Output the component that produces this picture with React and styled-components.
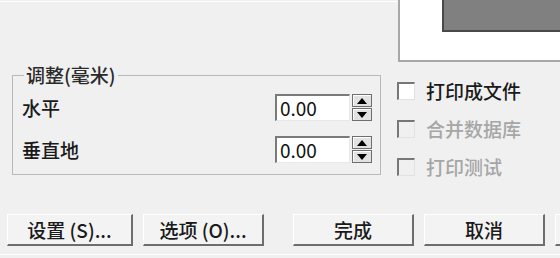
import React from "react";
import styled, { createGlobalStyle } from "styled-components";

const GlobalStyle = createGlobalStyle`
  html, body {
    margin: 0;
    padding: 0;
    background: #f0f0f0;
  }
  body {
    font-family: "Noto Sans CJK SC", "Noto Sans", sans-serif;
    color: #1a1a1a;
  }
`;

let Dialog = styled.div`
  width: 560px;
  height: 258px;
  overflow: hidden;
  background: #f0f0f0;
  display: flex;
  flex-direction: column;
`;

let TopStrip = styled.div`
  display: flex;
  height: 62px;
`;

let TopFiller = styled.div`
  flex: 1;
  margin-top: 1px;
  border-top: 1px solid #ffffff;
`;

let Preview = styled.div`
  width: 160px;
  height: 60px;
  background: #ffffff;
  border-left: 2px solid #a8a8a8;
  border-bottom: 2px solid #a8a8a8;
  display: flex;
  justify-content: flex-end;
  align-items: flex-start;
`;

let PreviewPage = styled.div`
  width: 116px;
  height: 30px;
  background: #808080;
  border-left: 2px solid #4a4a4a;
  border-bottom: 2px solid #4a4a4a;
`;

let Main = styled.div`
  display: flex;
  align-items: flex-start;
`;

let Group = styled.fieldset`
  margin: 2px 0 0 12px;
  padding: 8px 8px 11px 9px;
  width: 369px;
  box-sizing: border-box;
  border: 1px solid #b8b8b8;
  min-width: 0;
  display: flex;
  flex-direction: column;
  gap: 15px;
`;

let Legend = styled.legend`
  margin-left: 2px;
  padding: 0 2px;
  font-size: 19px;
  font-weight: 500;
  line-height: 22px;
  color: #2a2a2a;
`;

let Row = styled.div`
  display: flex;
  align-items: center;
  height: 27px;
`;

let Label = styled.span`
  font-size: 19px;
  font-weight: 500;
  line-height: 22px;
`;

let NumberField = styled.div`
  margin-left: auto;
  display: flex;
  gap: 2px;
`;

let Input = styled.div`
  width: 75px;
  height: 27px;
  box-sizing: border-box;
  background: #ffffff;
  border-style: solid;
  border-width: 2px 1px 1px 2px;
  border-color: #7a7a7a #e8e8e8 #e8e8e8 #7a7a7a;
  padding-left: 3px;
  font-size: 19px;
  line-height: 23px;
  color: #111;
`;

let Spinner = styled.div`
  width: 20px;
  height: 27px;
  display: flex;
  flex-direction: column;
  gap: 1px;
`;

let SpinButton = styled.div`
  flex: 1;
  box-sizing: border-box;
  background: #e2e2e2;
  border: 1px solid #6e6e6e;
  box-shadow: inset 1px 1px #ffffff;
  display: flex;
  align-items: center;
  justify-content: center;
`;

let Arrow = styled.span`
  width: 0;
  height: 0;
  border-left: 5px solid transparent;
  border-right: 5px solid transparent;
  ${(p) =>
    p.$down
      ? "border-top: 6px solid #000;"
      : "border-bottom: 6px solid #000;"}
`;

let CheckList = styled.div`
  margin-left: 16px;
  padding-top: 20px;
  display: flex;
  flex-direction: column;
  gap: 20px;
`;

let CheckRow = styled.label`
  display: flex;
  align-items: center;
  gap: 11px;
  height: 18px;
  font-size: 19px;
  font-weight: 500;
  line-height: 22px;
  color: ${(p) => (p.$disabled ? "#a6a6a6" : "#1a1a1a")};
`;

let Box = styled.span`
  width: 18px;
  height: 18px;
  box-sizing: border-box;
  border-style: solid;
  border-width: 2px 1px 1px 2px;
  border-color: #777 #e2e2e2 #e2e2e2 #777;
  background: ${(p) => (p.$disabled ? "#f0f0f0" : "#ffffff")};
`;

let ButtonRow = styled.div`
  margin-top: 38px;
  padding-left: 7px;
  display: flex;
  gap: 10px;
  height: 32px;
`;

let Button = styled.button`
  flex: none;
  width: ${(p) => p.$w || 121}px;
  height: 32px;
  margin-left: ${(p) => p.$gapBefore || 0}px;
  box-sizing: border-box;
  background: #f3f3f3;
  border-style: solid;
  border-width: 1px 2px 2px 1px;
  border-color: #ffffff #6d6d6d #6d6d6d #ffffff;
  font-family: inherit;
  font-size: 19px;
  font-weight: 500;
  line-height: 22px;
  color: #1a1a1a;
  padding: 0;
`;

let BottomLine = styled.div`
  margin-top: 8px;
  border-top: 1px solid #ffffff;
`;

function App() {
  const rows = ["水平", "垂直地"];
  const checks = [
    { text: "打印成文件", disabled: false },
    { text: "合并数据库", disabled: true },
    { text: "打印测试", disabled: true },
  ];

  return (
    <Dialog>
      <GlobalStyle />
      <TopStrip>
        <TopFiller />
        <Preview>
          <PreviewPage />
        </Preview>
      </TopStrip>
      <Main>
        <Group>
          <Legend>调整(毫米)</Legend>
          {rows.map((r) => (
            <Row key={r}>
              <Label>{r}</Label>
              <NumberField>
                <Input>0.00</Input>
                <Spinner>
                  <SpinButton>
                    <Arrow />
                  </SpinButton>
                  <SpinButton>
                    <Arrow $down />
                  </SpinButton>
                </Spinner>
              </NumberField>
            </Row>
          ))}
        </Group>
        <CheckList>
          {checks.map((c) => (
            <CheckRow key={c.text} $disabled={c.disabled}>
              <Box $disabled={c.disabled} />
              {c.text}
            </CheckRow>
          ))}
        </CheckList>
      </Main>
      <ButtonRow>
        <Button $w={126}>设置 (S)...</Button>
        <Button>选项 (O)...</Button>
        <Button $gapBefore={19}>完成</Button>
        <Button>取消</Button>
        <Button aria-label="帮助" />
      </ButtonRow>
      <BottomLine />
    </Dialog>
  );
}

export default App;
